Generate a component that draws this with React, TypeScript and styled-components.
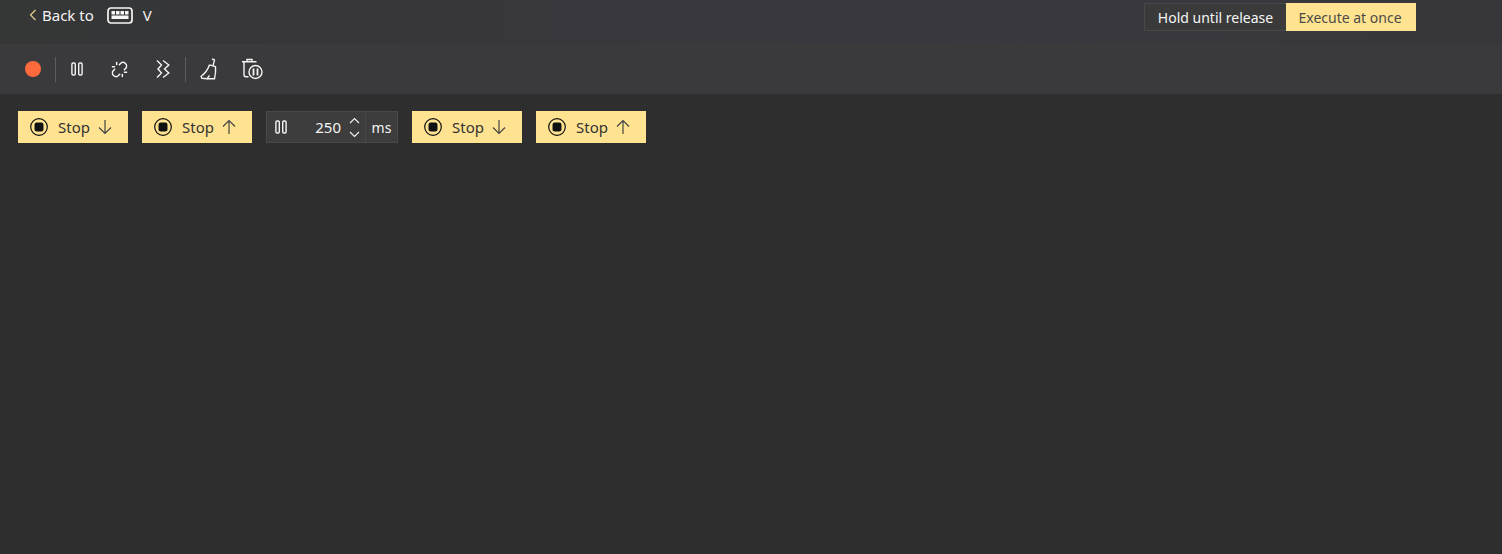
import React from 'react';
import styled, { createGlobalStyle } from 'styled-components';

const Global = createGlobalStyle`
  html, body { margin: 0; padding: 0; background: #2e2e2e; }
  body { font-family: "Noto Sans", "Open Sans", "Liberation Sans", sans-serif; overflow: hidden; }
`;

const Page = styled.div`
  width: 1502px;
  height: 554px;
  display: flex;
  flex-direction: column;
  background: #2e2e2e;
`;

const Header = styled.header`
  height: 44px;
  box-sizing: border-box;
  padding: 3px 86px 0 29px;
  display: flex;
  align-items: flex-start;
  justify-content: space-between;
  background: linear-gradient(90deg, #353636 0%, #37373c 35%, #38383e 65%, #37373b 100%);
`;

const BackGroup = styled.div`
  display: flex;
  align-items: center;
  height: 24px;
  color: #f4f4f4;
  font-size: 15px;
`;

const BackLink = styled.span`
  display: flex;
  align-items: center;
  gap: 5px;
  margin-right: 13px;
`;

const KeyName = styled.span`
  margin-left: 10px;
`;

const Toggle = styled.div`
  display: flex;
  height: 28px;
  font-size: 14px;
`;

const ToggleOption = styled.div<{ $active?: boolean; $w: number }>`
  width: ${p => p.$w}px;
  box-sizing: border-box;
  display: flex;
  align-items: center;
  justify-content: center;
  padding-right: ${p => (p.$active ? 2 : 0)}px;
  background: ${p => (p.$active ? '#ffe391' : '#3a3a3a')};
  color: ${p => (p.$active ? '#4a4a48' : '#f6f6f6')};
  border: 1px solid ${p => (p.$active ? '#ffe391' : '#484848')};
  border-right-width: ${p => (p.$active ? 1 : 0)}px;
`;

const Toolbar = styled.div`
  height: 50px;
  display: flex;
  align-items: center;
  padding-left: 25px;
  background: #3a3a3c;
`;

const RecordDot = styled.span`
  width: 16px;
  height: 16px;
  border-radius: 50%;
  background: #ff6a3d;
  margin-right: 14px;
`;

const Divider = styled.span`
  width: 1px;
  height: 25px;
  background: #5c5c5e;
`;

const ToolIcon = styled.span<{ $w: number }>`
  width: ${p => p.$w}px;
  height: 24px;
  display: flex;
  align-items: center;
  justify-content: center;
  color: #f4f4f4;
`;

const Canvas = styled.main`
  display: flex;
  gap: 14px;
  padding: 17px 18px;
`;

const StopChip = styled.div`
  width: 110px;
  height: 32px;
  box-sizing: border-box;
  padding-left: 12px;
  display: flex;
  align-items: center;
  background: #ffe391;
  color: #333333;
  font-size: 15px;
`;

const StopLabel = styled.span`
  margin: 0 7px 0 10px;
  width: 33px;
`;

const DelayBox = styled.div`
  width: 132px;
  height: 32px;
  box-sizing: border-box;
  display: flex;
  align-items: center;
  background: #3d3d3d;
  border: 1px solid #484848;
  color: #f4f4f4;
  font-size: 15px;
`;

const DelayPause = styled.span`
  width: 28px;
  display: flex;
  justify-content: center;
`;

const DelayValue = styled.span`
  width: 46px;
  text-align: right;
`;

const Spinner = styled.span`
  width: 24px;
  height: 30px;
  display: flex;
  flex-direction: column;
  align-items: center;
  justify-content: space-between;
  padding: 5px 0 4px 3px;
  box-sizing: border-box;
`;

const Unit = styled.span`
  flex: 1;
  height: 100%;
  display: flex;
  align-items: center;
  justify-content: center;
  border-left: 1px solid #484848;
  font-size: 14px;
`;

const Pause = ({ h = 14 }: { h?: number }) => (
  <svg width="12" height={h} viewBox={`0 0 12 ${h}`} fill="none" stroke="currentColor" strokeWidth="1.4">
    <rect x="0.9" y="1" width="3.4" height={h - 2} rx="1.2" />
    <rect x="7.7" y="1" width="3.4" height={h - 2} rx="1.2" />
  </svg>
);

const Unlink = () => (
  <svg width="17" height="17" viewBox="0 0 24 24" fill="none" stroke="currentColor" strokeWidth="2.1" strokeLinecap="round">
    <path d="m18.84 12.25 1.72-1.71h-.02a5.004 5.004 0 0 0-.12-7.07 5.006 5.006 0 0 0-6.95 0l-1.72 1.71" />
    <path d="m5.17 11.75-1.71 1.71a5.004 5.004 0 0 0 .12 7.07 5.006 5.006 0 0 0 6.95 0l1.71-1.71" />
    <path d="M8 2v3M2 8h3M16 19v3M19 16h3" />
  </svg>
);

const Zigzags = () => (
  <svg width="14" height="20" viewBox="0 0 14 20" fill="none" stroke="currentColor" strokeWidth="1.4">
    <path d="M1 1.500l4.500 4.500-3.500 4 3.500 4-4.500 4.500" />
    <path d="M7 1.500l5.800 4.500-4.300 4 4.300 4-5.800 4.500" />
  </svg>
);

const Broom = () => (
  <svg width="18" height="22" viewBox="0 0 18 22" fill="none" stroke="currentColor" strokeWidth="1.400" strokeLinejoin="round">
    <path d="M12 1l2.500.8-1.500 6" />
    <path d="M9.500 6.800l6 1.800c.4 4 0 8-1 12.200H7" />
    <path d="M9.500 6.800C8 11.500 5 15.500 1 18.500l1 1.800 5 .5 2.500-3.300" />
  </svg>
);

const TrashPause = () => (
  <svg width="22" height="22" viewBox="0 0 22 22" fill="none" stroke="currentColor" strokeWidth="1.400">
    <path d="M1 3.800h14.500M6 3.800V1.500h5v2.300" />
    <path d="M3 3.800v13a2 2 0 0 0 2 2h2.500" />
    <circle cx="14.500" cy="14" r="6.500" />
    <path d="M12.500 10.500v7M16.500 10.500v7" strokeWidth="1.800" />
  </svg>
);

const Keyboard = () => (
  <svg width="26" height="17" viewBox="0 0 26 17" fill="none">
    <rect x="1" y="1" width="24" height="15" rx="3" stroke="#f6f6f6" strokeWidth="1.700" />
    <path d="M4.500 4h3.500v3.500H4.500zM9 4h3.500v3.500H9zM13.500 4h3.500v3.500h-3.500zM18 4h3.500v3.500H18zM4.500 8.500h17V12h-17z" fill="#f6f6f6" />
  </svg>
);

const StopIcon = () => (
  <svg width="18" height="18" viewBox="0 0 18 18">
    <circle cx="9" cy="9" r="8.300" fill="none" stroke="#111" strokeWidth="1.200" />
    <rect x="4.500" y="4.500" width="9" height="9" rx="2.200" fill="#111" />
  </svg>
);

const Arrow = ({ up }: { up?: boolean }) => (
  <svg width="14" height="16" viewBox="0 0 14 16" fill="none" stroke="#444" strokeWidth="1.200" style={{ transform: up ? 'scaleY(-1)' : undefined }}>
    <path d="M7 1v13.500M1 8.500l6 6 6-6" />
  </svg>
);

const Caret = ({ up }: { up?: boolean }) => (
  <svg width="11" height="7" viewBox="0 0 11 7" fill="none" stroke="#f0f0f0" strokeWidth="1.200">
    <path d={up ? 'M1 6l4.500-4.500L10 6' : 'M1 1l4.500 4.500L10 1'} />
  </svg>
);

const Stop = ({ up }: { up?: boolean }) => (
  <StopChip>
    <StopIcon />
    <StopLabel>Stop</StopLabel>
    <Arrow up={up} />
  </StopChip>
);

export default function App() {
  return (
    <Page>
      <Global />
      <Header>
        <BackGroup>
          <BackLink>
            <svg width="8" height="12" viewBox="0 0 8 12" fill="none" stroke="#e8cf8e" strokeWidth="1.200">
              <path d="M6.500 1L1.500 6l5 5" />
            </svg>
            Back to
          </BackLink>
          <Keyboard />
          <KeyName>V</KeyName>
        </BackGroup>
        <Toggle>
          <ToggleOption $w={142}>Hold until release</ToggleOption>
          <ToggleOption $active $w={130}>Execute at once</ToggleOption>
        </Toggle>
      </Header>
      <Toolbar>
        <RecordDot />
        <Divider />
        <ToolIcon $w={42}><Pause /></ToolIcon>
        <ToolIcon $w={43}><Unlink /></ToolIcon>
        <ToolIcon $w={44}><Zigzags /></ToolIcon>
        <Divider />
        <ToolIcon $w={46}><Broom /></ToolIcon>
        <ToolIcon $w={40}><TrashPause /></ToolIcon>
      </Toolbar>
      <Canvas>
        <Stop />
        <Stop up />
        <DelayBox>
          <DelayPause><Pause /></DelayPause>
          <DelayValue>250</DelayValue>
          <Spinner><Caret up /><Caret /></Spinner>
          <Unit>ms</Unit>
        </DelayBox>
        <Stop />
        <Stop up />
      </Canvas>
    </Page>
  );
}
